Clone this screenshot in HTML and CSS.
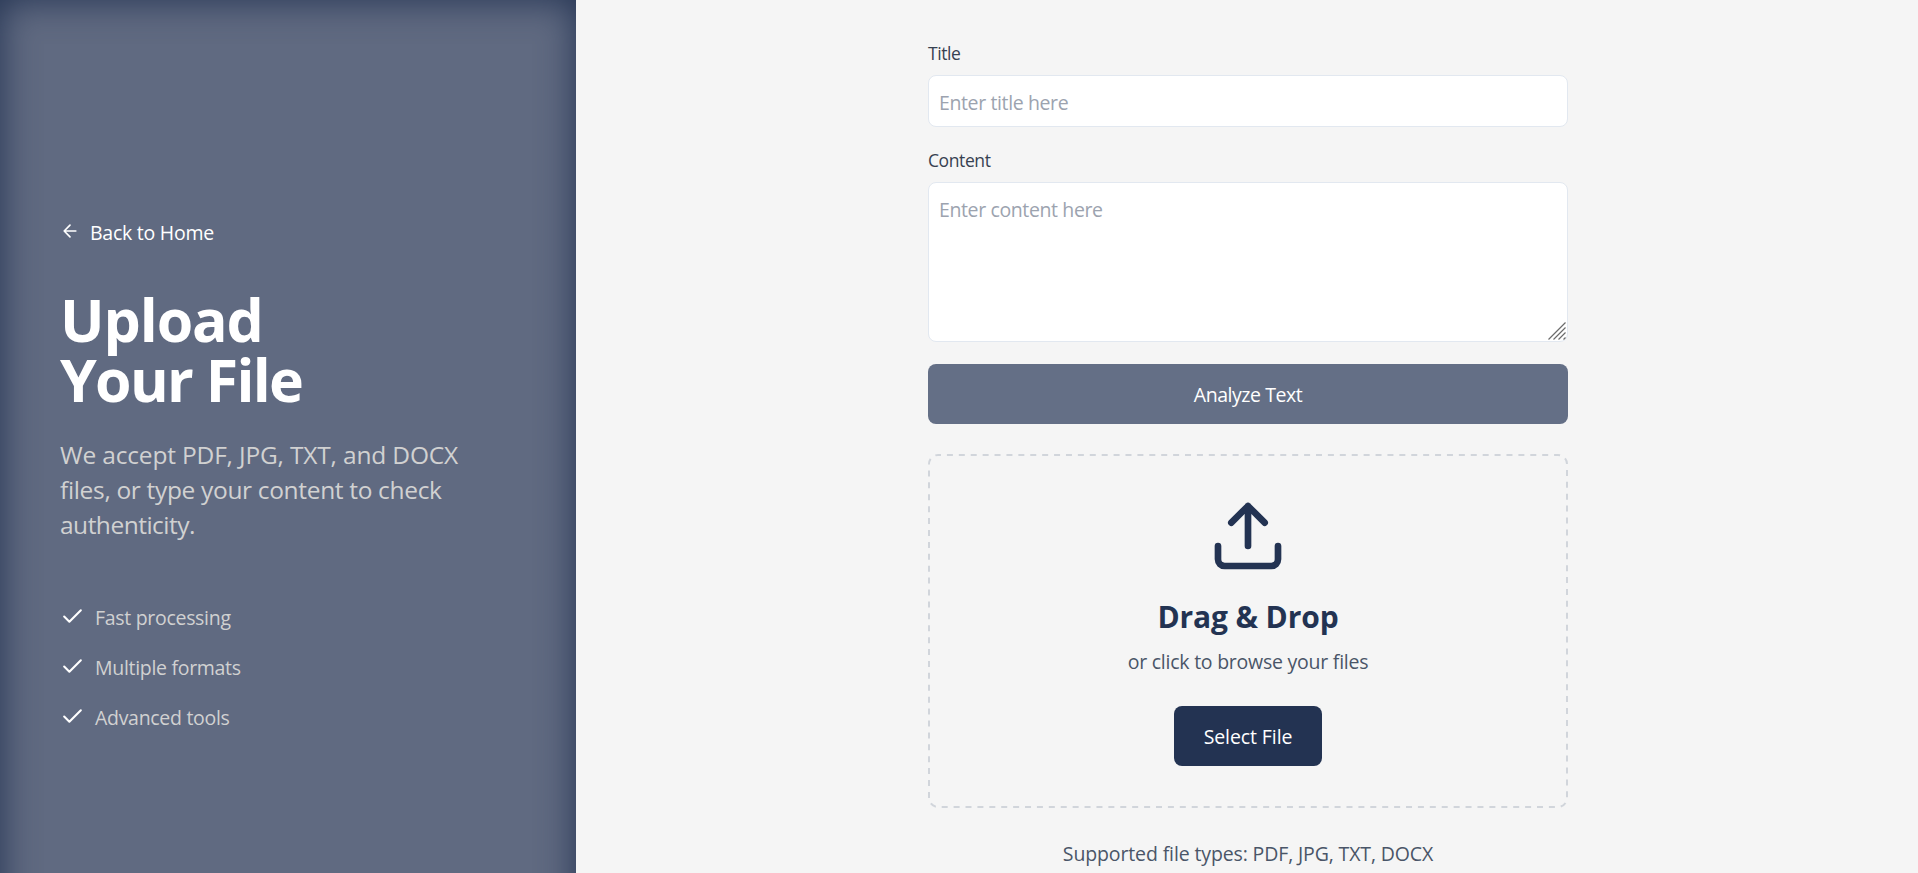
FILE: index.html
```html
<!DOCTYPE html>
<html lang="en">
<head>
<meta charset="utf-8">
<title>Upload Your File</title>
<link rel="stylesheet" href="styles.css">
</head>
<body>
<div class="page">
  <aside class="panel">
    <a class="back"><svg class="back-icon" viewBox="0 0 24 24"><path d="M19 12H5M12 19l-7-7 7-7"/></svg><span class="back-text">Back to Home</span></a>
    <h1 class="heading"><span class="heading-first">Upload</span><br>Your File</h1>
    <p class="lead"><span class="lead-first">We accept PDF, JPG, TXT, and DOCX</span><br>files, or type your content to check<br><span class="lead-last">authenticity.</span></p>
    <ul class="features">
      <li class="feature"><svg class="check" viewBox="0 0 24 24"><path d="M20 6 9 17l-5-5"/></svg><span>Fast processing</span></li>
      <li class="feature"><svg class="check" viewBox="0 0 24 24"><path d="M20 6 9 17l-5-5"/></svg><span>Multiple formats</span></li>
      <li class="feature"><svg class="check" viewBox="0 0 24 24"><path d="M20 6 9 17l-5-5"/></svg><span>Advanced tools</span></li>
    </ul>
  </aside>
  <main class="main">
    <form class="form">
      <label class="label" for="title">Title</label>
      <input class="field" id="title" placeholder="Enter title here">
      <label class="label label-content" for="content">Content</label>
      <div class="area-wrap">
        <textarea class="field area" id="content" placeholder="Enter content here"></textarea>
        <svg class="grip" viewBox="0 0 18 18"><path d="M.5 17.5l17-17M5.5 17.5l12-12M10.5 17.5l7-7M15.5 17.5l2-2"/></svg>
      </div>
      <button class="analyze" type="button">Analyze Text</button>
      <section class="drop">
        <svg class="outline" viewBox="0 0 640 354"><rect x="1" y="1" width="638" height="352" rx="9"/></svg>
        <svg class="upload" viewBox="0 0 24 24"><path d="M21 15v4a2 2 0 0 1-2 2H5a2 2 0 0 1-2-2v-4M17 8l-5-5-5 5M12 3v12"/></svg>
        <h2 class="drop-title">Drag &amp; Drop</h2>
        <p class="drop-sub">or click to browse your files</p>
        <button class="select" type="button">Select File</button>
      </section>
      <p class="supported">Supported file types: PDF, JPG, TXT, DOCX</p>
    </form>
  </main>
</div>
</body>
</html>
```
FILE: styles.css
```css
* { box-sizing: border-box; margin: 0; padding: 0; }
html { height: 873px; overflow: hidden; }
body { height: 873px; overflow: hidden; background: #f5f5f5; font: 19.5px/30px "Segoe UI", "Open Sans", "Noto Sans", sans-serif; }
svg { fill: none; stroke: currentColor; stroke-width: 2; stroke-linecap: round; stroke-linejoin: round; flex: none; display: block; }
.page { display: flex; width: 1920px; height: 960px; }
.panel { width: 30%; flex: none; padding: 218px 60px 0; color: #fff; background: #606a81; box-shadow: inset 0 0 37.5px #233352; }
.back { display: flex; align-items: center; gap: 10px; height: 30px; letter-spacing: -0.25px; }
.back-icon { width: 20px; height: 20px; margin-top: -4px; }
.heading { margin-top: 41px; font-size: 59px; line-height: 60px; font-weight: 700; letter-spacing: -1.7px; white-space: nowrap; }
.heading-first { letter-spacing: -1.1px; }
.lead { margin-top: 28px; font-size: 24.5px; line-height: 35px; color: #d1d1d1; white-space: nowrap; letter-spacing: -0.33px; }
.lead-first { letter-spacing: -0.17px; }
.lead-last { letter-spacing: -0.5px; }
.features { margin-top: 61px; list-style: none; display: flex; flex-direction: column; gap: 20px; }
.feature { display: flex; align-items: center; gap: 10px; height: 30px; color: #d1d1d1; letter-spacing: -0.3px; }
.check { width: 25px; height: 25px; color: #fff; margin-top: -4px; }
.main { flex: 1; display: flex; justify-content: center; }
.form { width: 640px; margin-top: 41px; display: flex; flex-direction: column; }
.label { font-size: 17.5px; line-height: 25px; height: 34px; color: #374151; letter-spacing: -0.4px; }
.label-content { margin-top: 21px; }
.field { display: block; width: 640px; height: 52px; padding: 12px 10px 10px; border: 1px solid #e2e8f0; border-radius: 8px; background: #fff; font: inherit; letter-spacing: -0.38px; outline: none; }
.field::placeholder { color: #9ca3af; opacity: 1; }
.area-wrap { position: relative; }
.area { height: 160px; resize: none; }
.grip { position: absolute; right: 2px; bottom: 2px; width: 18px; height: 18px; color: #6b6b6b; stroke-width: 1.2; stroke-linecap: butt; }
.analyze { margin-top: 22px; height: 60px; padding-top: 1px; border: 0; border-radius: 8px; background: #646f86; color: #fff; font: inherit; letter-spacing: -0.45px; }
.drop { position: relative; margin-top: 30px; height: 354px; padding-top: 42px; display: flex; flex-direction: column; align-items: center; }
.outline { position: absolute; inset: 0; width: 640px; height: 354px; color: #d1d5db; stroke-linecap: butt; stroke-dasharray: 6 5.906; stroke-dashoffset: 3; }
.upload { width: 80px; height: 80px; color: #233352; }
.drop-title { margin-top: 21px; font-size: 30px; line-height: 40px; color: #233352; letter-spacing: -0.12px; }
.drop-sub { margin-top: 10px; color: #4a5568; letter-spacing: -0.24px; }
.select { margin-top: 29px; width: 148px; height: 60px; padding-top: 1px; border: 0; border-radius: 8px; background: #233352; color: #fff; font: inherit; letter-spacing: -0.1px; }
.supported { margin-top: 31px; text-align: center; color: #4a5568; letter-spacing: -0.13px; }
```
